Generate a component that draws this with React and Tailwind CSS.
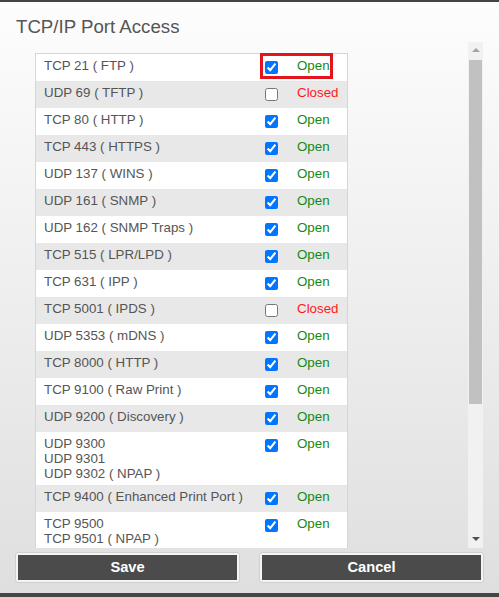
import React from "react";

const ports = [
  { lines: ["TCP 21 ( FTP )"], open: true },
  { lines: ["UDP 69 ( TFTP )"], open: false },
  { lines: ["TCP 80 ( HTTP )"], open: true },
  { lines: ["TCP 443 ( HTTPS )"], open: true },
  { lines: ["UDP 137 ( WINS )"], open: true },
  { lines: ["UDP 161 ( SNMP )"], open: true },
  { lines: ["UDP 162 ( SNMP Traps )"], open: true },
  { lines: ["TCP 515 ( LPR/LPD )"], open: true },
  { lines: ["TCP 631 ( IPP )"], open: true },
  { lines: ["TCP 5001 ( IPDS )"], open: false },
  { lines: ["UDP 5353 ( mDNS )"], open: true },
  { lines: ["TCP 8000 ( HTTP )"], open: true },
  { lines: ["TCP 9100 ( Raw Print )"], open: true },
  { lines: ["UDP 9200 ( Discovery )"], open: true },
  { lines: ["UDP 9300", "UDP 9301", "UDP 9302 ( NPAP )"], open: true },
  { lines: ["TCP 9400 ( Enhanced Print Port )"], open: true },
  { lines: ["TCP 9500", "TCP 9501 ( NPAP )"], open: true },
];

function PortRow({ port, index }) {
  return (
    <div className={`relative flex items-start py-[4px] ${index % 2 === 1 ? "bg-[#e8e8e8]" : "bg-white"}`}>
      <div className="w-[224px] shrink-0 pl-[8px] leading-[15px] text-[#555]">
        {port.lines.map((l) => (
          <div key={l}>{l}</div>
        ))}
      </div>
      <div className="w-[32px] shrink-0">
        <input
          type="checkbox"
          defaultChecked={port.open}
          className="block ml-[5px] mt-[3px] mb-[3px] w-[13px] h-[13px]"
        />
      </div>
      <div className={`pl-[5px] leading-[15px] ${port.open ? "text-[#138a13]" : "text-[#ff1a1a]"}`}>
        {port.open ? "Open" : "Closed"}
      </div>
      {/* highlight around the first row's toggle */}
      {index === 0 && (
        <div className="absolute left-[224px] top-[-1px] w-[73px] h-[26px] border-[3px] border-[#e3141c] pointer-events-none" />
      )}
    </div>
  );
}

function Scrollbar() {
  return (
    <div className="w-[15px] shrink-0 h-full bg-[#f1f1f1] flex flex-col items-center">
      <div className="h-[15px] w-full flex items-center justify-center pt-[1px]">
        <div className="w-0 h-0 border-l-[4px] border-r-[4px] border-b-[4px] border-l-transparent border-r-transparent border-b-[#a3a3a3]" />
      </div>
      <div className="mt-[3px] h-[344px] w-[13px] bg-[#c1c1c1]" />
      <div className="flex-1" />
      <div className="h-[15px] w-full flex items-center justify-center pb-[4px]">
        <div className="w-0 h-0 border-l-[4px] border-r-[4px] border-t-[4px] border-l-transparent border-r-transparent border-t-[#505050]" />
      </div>
    </div>
  );
}

function DialogButton({ children }) {
  return (
    <button className="w-[225px] h-[31px] rounded-[3px] border border-[#cfcfcf] bg-[#f4f4f4] p-[2px] cursor-pointer">
      <span className="block h-full bg-[#4b4b4b] text-white font-bold text-[14.67px] leading-[25px]">{children}</span>
    </button>
  );
}

export default function App() {
  return (
    <div
      className="w-[499px] h-[597px] flex flex-col border-t-2 border-t-[#444] border-b-4 border-b-[#454545] bg-linear-to-b from-[#fdfdfd] to-[#dfdfdf] text-[13.33px]"
      style={{ fontFamily: '"Liberation Sans", Arial, sans-serif' }}
    >
      <h1 className="pt-[13px] pl-[16px] text-[18.67px] leading-[24px] font-normal text-[#555]">TCP/IP Port Access</h1>

      <div className="mt-[3px] h-[506px] flex">
        <div className="w-[468px] shrink-0 h-full overflow-hidden pt-[11px] pl-[35px]">
          <div className="w-[313px] border-x border-t border-[#d6d6d6] bg-white">
            {ports.map((p, i) => (
              <PortRow key={i} port={p} index={i} />
            ))}
          </div>
        </div>
        <Scrollbar />
      </div>

      <div className="mt-[4px] flex gap-[19px] pl-[15px]">
        <DialogButton>Save</DialogButton>
        <DialogButton>Cancel</DialogButton>
      </div>
    </div>
  );
}
